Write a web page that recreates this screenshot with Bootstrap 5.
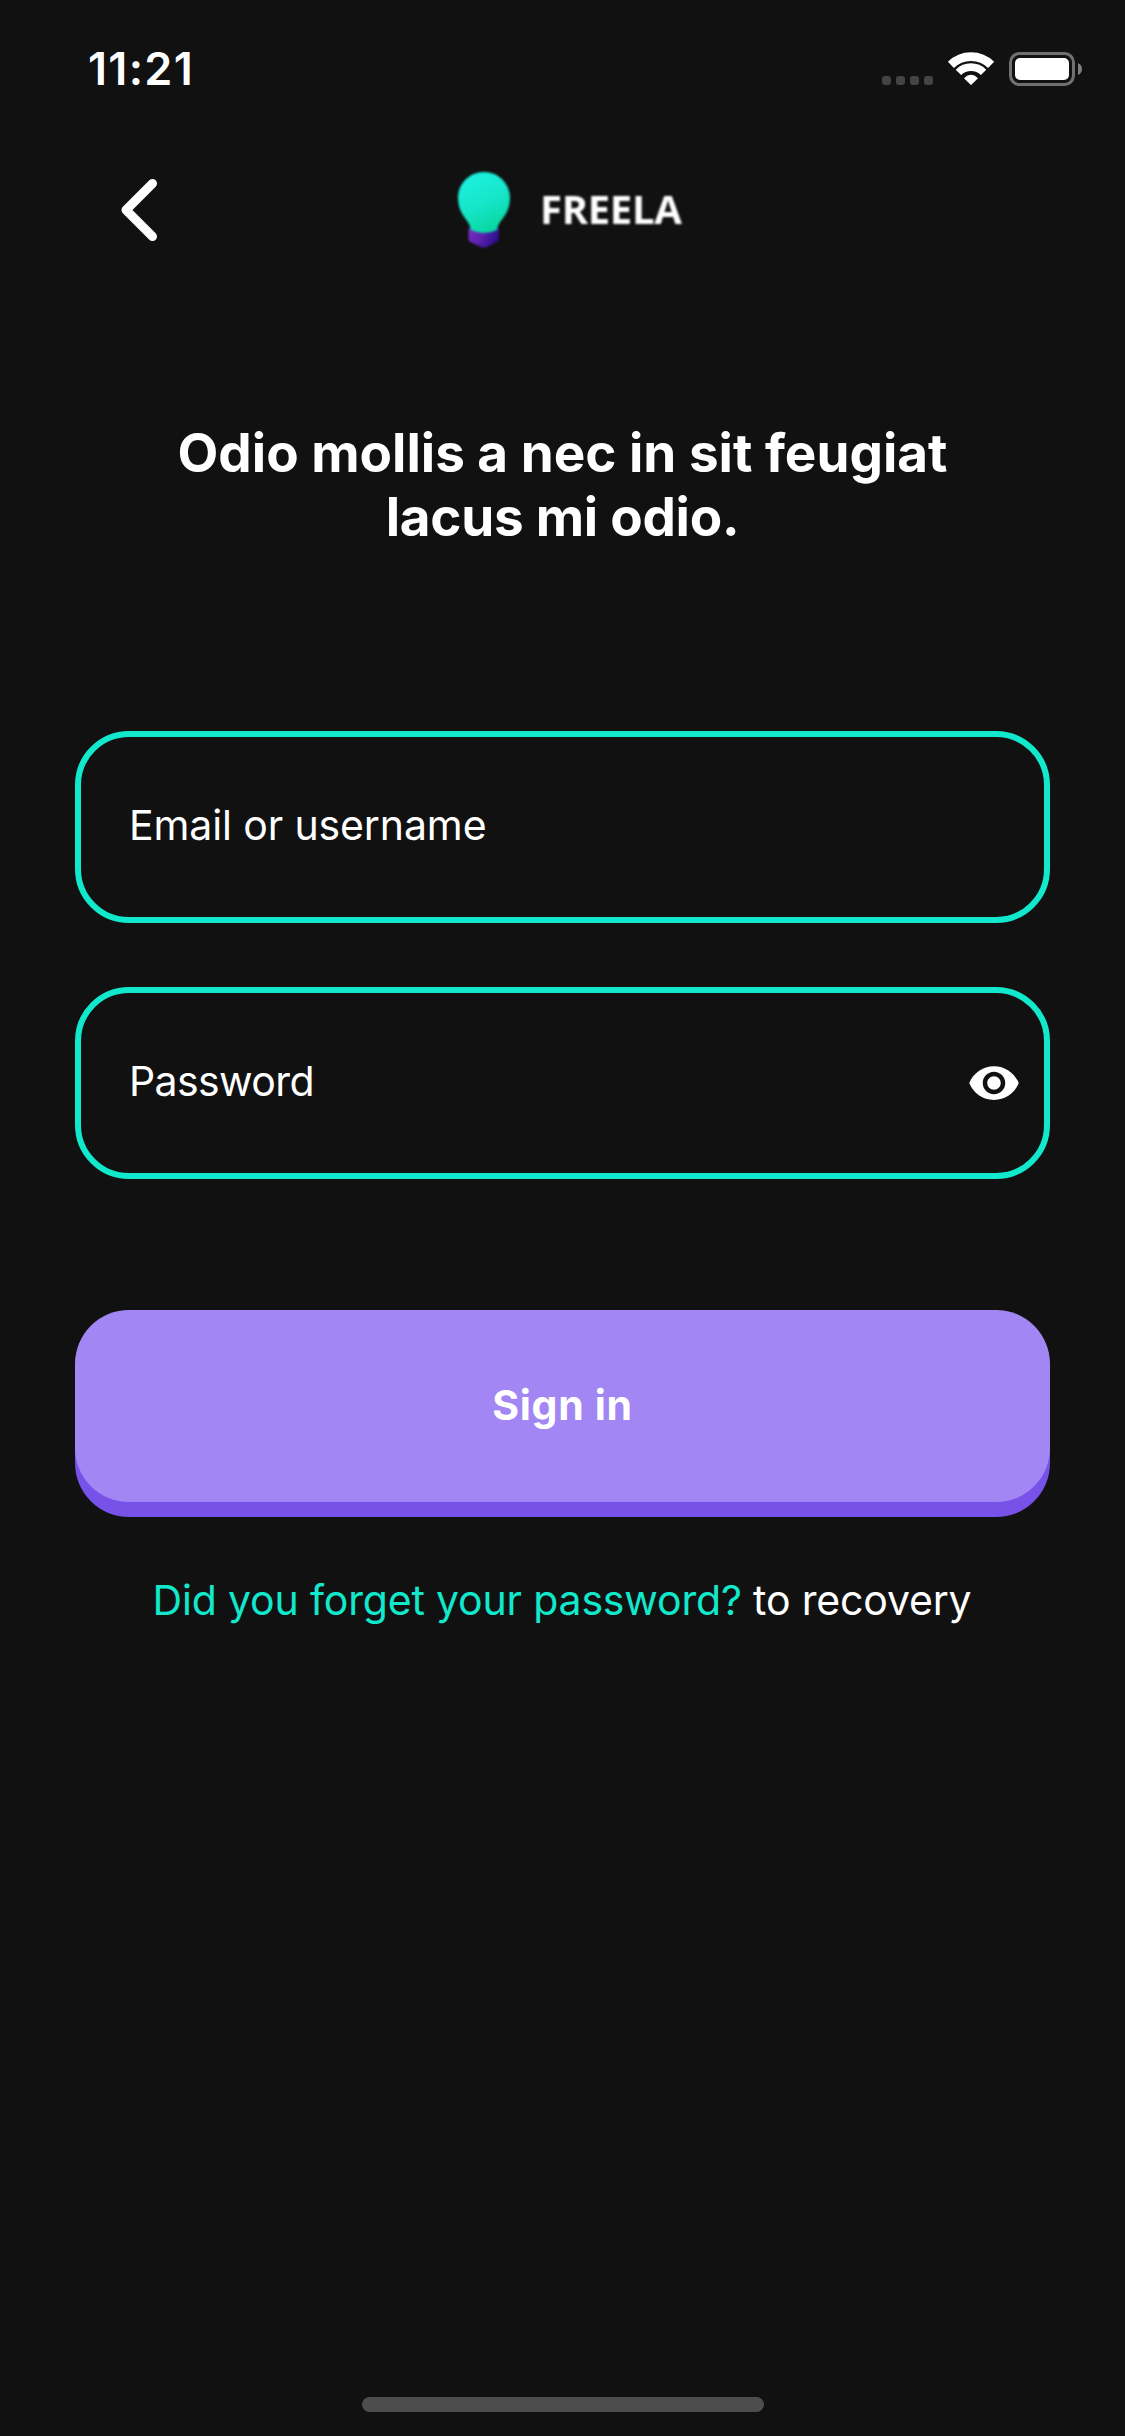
<!DOCTYPE html>
<html lang="en">
<head>
<meta charset="utf-8">
<meta name="viewport" content="width=device-width, initial-scale=1">
<title>Freela – Sign in</title>
<link href="https://cdn.jsdelivr.net/npm/bootstrap@5.3.0/dist/css/bootstrap.min.css" rel="stylesheet">
<style>
  body { background: #111; color: #fff; font-family: Inter, "Liberation Sans", sans-serif; }
  .phone { width: 1125px; height: 2436px; background: #111; overflow: hidden; }
  .status-bar { height: 132px; padding: 44px 43px 0 88px; }
  .status-time { font-size: 45px; line-height: 50px; font-weight: 600; letter-spacing: 1.3px; }
  .status-icons { margin-top: 8px; }
  .top-bar { height: 156px; padding-left: 117px; gap: 296px; }
  .brand { gap: 30px; filter: blur(.8px); }
  .brand-name { font-family: "Open Sans", "Noto Sans", sans-serif; font-weight: 700; font-size: 40px; line-height: 56px; letter-spacing: -.3px; padding-bottom: 3px; }
  .headline { margin-top: 133px; font-size: 53px; line-height: 64px; font-weight: 700; letter-spacing: 0; }
  .headline .tail { letter-spacing: -.26px; }
  .login-form { margin-top: 182px; padding: 0 75px; }
  .fields { gap: 64px; }
  .field { height: 192px; border: 6px solid #12e8cc; border-radius: 54px; padding: 0 23px 0 48px; }
  .field .form-control, .field .form-control:focus { background: transparent; color: #fff; font-size: 41px; line-height: 52px; padding: 0 0 4px; letter-spacing: -.12px; box-shadow: none; }
  .field .form-control[type="password"] { letter-spacing: -.6px; }
  .field .form-control::placeholder { color: #fff; opacity: 1; }
  .sign-in { --bs-btn-bg: #a286f4; --bs-btn-color: #fff; --bs-btn-hover-bg: #a286f4; --bs-btn-hover-color: #fff; height: 192px; margin-top: 131px; padding: 0; border-radius: 54px; box-shadow: 0 15px 0 #7752e8; font-size: 41px; font-weight: 700; letter-spacing: .7px; }
  .recovery { margin-top: 72px; font-size: 41px; line-height: 52px; letter-spacing: -.17px; padding-right: 1px; }
  .recovery a { color: #12e8cc; }
  .home-indicator { width: 402px; height: 15px; background: #4d4d4d; margin-bottom: 24px; }
</style>
</head>
<body>
<div class="phone d-flex flex-column">
  <div class="status-bar d-flex justify-content-between align-items-start">
    <span class="status-time">11:21</span>
    <svg class="status-icons" width="200" height="34" viewBox="0 0 200 34" aria-hidden="true">
      <g fill="#444">
        <rect x="0" y="24" width="9" height="9" rx="3"/>
        <rect x="14" y="24" width="9" height="9" rx="3"/>
        <rect x="28" y="24" width="9" height="9" rx="3"/>
        <rect x="42" y="24" width="9" height="9" rx="3"/>
      </g>
      <g fill="none" stroke="#fff">
        <path d="M68.900 12.900A28.500 28.500 0 0 1 109.100 12.900" stroke-width="8.6"/>
        <path d="M76.400 20.400A17.800 17.800 0 0 1 101.600 20.400" stroke-width="7.6"/>
      </g>
      <path d="M82 26.200Q89 19.400 96 26.200L89.600 32.600Q89 33.200 88.400 32.600Z" fill="#fff"/>
      <rect x="128.500" y="1.500" width="63" height="31" rx="9" fill="none" stroke="#707070" stroke-width="3"/>
      <rect x="133" y="6" width="54" height="22" rx="5" fill="#fff"/>
      <path d="M196 11Q200 13 200 17T196 23Z" fill="#808080"/>
    </svg>
  </div>

  <header class="top-bar d-flex align-items-center">
    <a href="#" class="d-flex text-white" aria-label="Back">
      <svg width="45" height="70" viewBox="0 0 45 70"><path d="M35.500 8.500L9 35L35.500 61.500" fill="none" stroke="#fff" stroke-width="9" stroke-linecap="round" stroke-linejoin="round"/></svg>
    </a>
    <div class="brand d-flex align-items-center">
      <svg width="52" height="76" viewBox="0 0 52 76" aria-hidden="true">
        <defs>
          <linearGradient id="bulb" x1=".35" y1="0" x2=".75" y2="1">
            <stop offset="0" stop-color="#1cf0e0"/>
            <stop offset=".5" stop-color="#16e5c8"/>
            <stop offset="1" stop-color="#08d49a"/>
          </linearGradient>
          <linearGradient id="socket" x1="0" y1="0" x2="1" y2=".3">
            <stop offset="0" stop-color="#7a30c4"/>
            <stop offset=".5" stop-color="#5d22b0"/>
            <stop offset="1" stop-color="#2c0f8c"/>
          </linearGradient>
        </defs>
        <path d="M10.500 56H41V66Q41 69 38 70.500L29 75Q26 76.500 23 75L13.500 70.500Q10.500 69 10.500 66Z" fill="url(#socket)"/>
        <path d="M26 0C40.500 0 52 11.500 52 26C52 33 50 39 46.500 44C43 49 40 52 39 58Q33 61 26 61T13 58C12 52 9 49 5.500 44C2 39 0 33 0 26C0 11.500 11.500 0 26 0Z" fill="url(#bulb)"/>
      </svg>
      <span class="brand-name">FREELA</span>
    </div>
  </header>

  <h1 class="headline text-center mb-0">Odio mollis a nec in sit feugiat<br><span class="tail">lacus mi odio.</span></h1>

  <form class="login-form d-flex flex-column">
    <div class="fields d-flex flex-column">
      <div class="field d-flex align-items-center">
        <input type="text" class="form-control border-0 rounded-0" placeholder="Email or username" aria-label="Email or username">
      </div>
      <div class="field d-flex align-items-center">
        <input type="password" class="form-control border-0 rounded-0" placeholder="Password" aria-label="Password">
        <svg class="flex-shrink-0" width="54" height="54" viewBox="0 0 24 24" fill="#fff" role="img" aria-label="Show password"><path d="M12 4.500C7 4.500 2.730 7.610 1 12c1.730 4.390 6 7.500 11 7.500s9.270-3.110 11-7.500c-1.730-4.390-6-7.500-11-7.500zM12 17c-2.760 0-5-2.240-5-5s2.240-5 5-5 5 2.240 5 5-2.240 5-5 5zm0-8c-1.660 0-3 1.340-3 3s1.340 3 3 3 3-1.340 3-3-1.340-3-3-3z"/></svg>
      </div>
    </div>
    <button type="button" class="btn sign-in w-100 border-0">Sign in</button>
  </form>

  <p class="recovery text-center mb-0"><a href="#" class="text-decoration-none">Did you forget your password?</a> to recovery</p>

  <div class="home-indicator rounded-pill mx-auto mt-auto"></div>
</div>
</body>
</html>
